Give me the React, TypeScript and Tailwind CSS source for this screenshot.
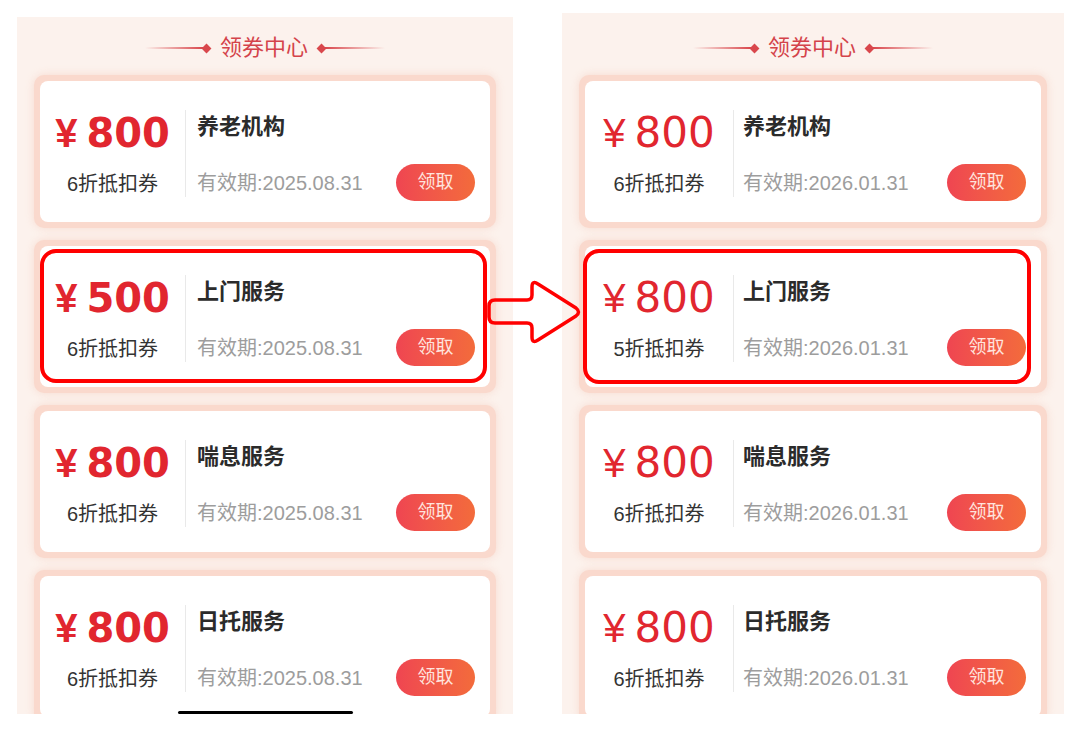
import React from "react";

const cjk = "font-['Liberation_Sans','Noto_Sans_CJK_SC',sans-serif]";

type Coupon = { price: string; rate: string; title: string; date: string };

const before: Coupon[] = [
  { price: "800", rate: "6", title: "养老机构", date: "2025.08.31" },
  { price: "500", rate: "6", title: "上门服务", date: "2025.08.31" },
  { price: "800", rate: "6", title: "喘息服务", date: "2025.08.31" },
  { price: "800", rate: "6", title: "日托服务", date: "2025.08.31" },
];

const after: Coupon[] = [
  { price: "800", rate: "6", title: "养老机构", date: "2026.01.31" },
  { price: "800", rate: "5", title: "上门服务", date: "2026.01.31" },
  { price: "800", rate: "6", title: "喘息服务", date: "2026.01.31" },
  { price: "800", rate: "6", title: "日托服务", date: "2026.01.31" },
];

function Header({ wide }: { wide?: boolean }) {
  return (
    <div
      className={`flex items-center justify-center gap-[6px] ${
        wide ? "h-[62px] pt-[8px]" : "h-[58px] pt-[4px]"
      }`}
    >
      <div className="w-[58px] h-[2px] bg-linear-to-r from-transparent to-[#d9474c]" />
      <div className="w-[7px] h-[7px] rotate-45 bg-[#d9474c] -ml-[6px]" />
      <span className={`${cjk} text-[22px] leading-[28px] text-[#d4434a] px-[4px]`}>
        领券中心
      </span>
      <div className="w-[7px] h-[7px] rotate-45 bg-[#d9474c]" />
      <div className="w-[60px] h-[2px] bg-linear-to-l from-transparent to-[#d9474c] -ml-[6px]" />
    </div>
  );
}

function CouponCard({ c, bold }: { c: Coupon; bold?: boolean }) {
  return (
    <div className="bg-[#fad9cd] rounded-[10px] p-[6px] h-[153px] shrink-0 shadow-[0_0_8px_rgba(244,190,170,0.45)]">
      <div className="bg-white rounded-[8px] h-[141px] flex items-start pt-[29px]">
        <div className={`${bold ? "w-[145px]" : "w-[148px]"} flex flex-col items-center`}>
          <div
            className={`flex items-baseline h-[46px] leading-[46px] text-[#e1262f] font-['DejaVu_Sans',sans-serif] ${
              bold ? "font-bold" : "font-normal"
            }`}
          >
            <span className={`text-[40px] mr-[9px] font-['Liberation_Sans',sans-serif] ${bold ? "font-bold" : "font-normal"}`}>¥</span>
            <span className={bold ? "text-[40px]" : "text-[42px]"}>{c.price}</span>
          </div>
          <div className={`${cjk} mt-[15px] text-[20px] leading-[26px] text-[#333333]`}>
            {c.rate}折抵扣券
          </div>
        </div>
        <div className="w-px h-[87px] bg-[#e9e9e9]" />
        <div className={`flex-1 flex flex-col ${bold ? "pl-[11px] pr-[15px]" : "pl-[9px] pr-[15px]"}`}>
          <div className={`${cjk} mt-[2px] text-[22px] leading-[30px] font-semibold text-[#2b2b2b]`}>
            {c.title}
          </div>
          <div className="mt-[22px] h-[37px] flex items-center justify-between">
            <span className={`${cjk} text-[20px] leading-[26px] text-[#9d9d9d]`}>
              有效期:{c.date}
            </span>
            <button className={`${cjk} w-[79px] h-[37px] rounded-full bg-linear-to-r from-[#ef4551] to-[#f36b3b] text-[18px] text-[#ffe4de]`}>
              领取
            </button>
          </div>
        </div>
      </div>
    </div>
  );
}

export default function App() {
  return (
    <div className="relative w-[1080px] h-[744px] bg-white overflow-hidden flex items-start">
      {/* before */}
      <div className="relative ml-[17px] mt-[17px] w-[496px] h-[697px] bg-[#fcf2ed] overflow-hidden">
        <Header />
        <div className="px-[17px] flex flex-col gap-[12px]">
          {before.map((c) => (
            <CouponCard key={c.title} c={c} bold />
          ))}
        </div>
        <div className="absolute left-[161px] bottom-0 w-[175px] h-[3px] rounded-full bg-black" />
      </div>

      {/* after */}
      <div className="ml-[49px] mt-[13px] w-[502px] h-[701px] bg-[#fcf2ed] overflow-hidden">
        <Header wide />
        <div className="px-[17px] flex flex-col gap-[12px]">
          {after.map((c) => (
            <CouponCard key={c.title} c={c} />
          ))}
        </div>
      </div>

      {/* annotations */}
      <div className="absolute left-[40px] top-[249px] w-[447px] h-[134px] border-4 border-[#ff0000] rounded-[16px] pointer-events-none" />
      <div className="absolute left-[583px] top-[249px] w-[448px] h-[135px] border-4 border-[#ff0000] rounded-[16px] pointer-events-none" />
      <svg className="absolute inset-0 pointer-events-none" width="1080" height="744">
        <path
          d="M 495 300 H 527 Q 532 300 532 295 V 287 Q 532 280 538 284 L 576 308 Q 581 312 576 316 L 538 340 Q 532 344 532 337 V 328 Q 532 323 527 323 H 495 Q 489 323 489 317 V 306 Q 489 300 495 300 Z"
          fill="none"
          stroke="#ff0000"
          strokeWidth="3.5"
          strokeLinejoin="round"
        />
      </svg>
    </div>
  );
}
